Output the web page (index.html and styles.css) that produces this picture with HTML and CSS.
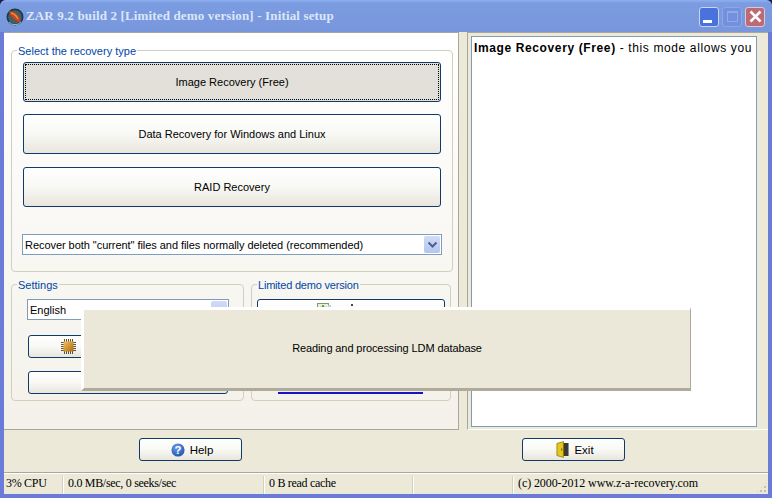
FILE: index.html
```html
<!DOCTYPE html>
<html lang="en">
<head>
<meta charset="utf-8">
<title>ZAR 9.2 build 2</title>
<link rel="stylesheet" href="styles.css">
</head>
<body>
<div class="window">
  <header class="titlebar">
    <svg class="app-icon" width="18" height="18" viewBox="0 0 18 18">
      <circle cx="9" cy="9" r="8.5" fill="#1d3a46"/>
      <circle cx="9" cy="9" r="6.8" fill="#40606a"/>
      <path d="M3 3.5 C7 2.5 12 6 14.5 12 C15 14 13.500 14.500 12 13.500 C8 11.500 4.500 8 3 3.500Z" fill="#d8401c"/>
      <path d="M5 5 C8 5.500 10.500 8 12 11" stroke="#f09030" stroke-width="1.300" fill="none"/>
      <path d="M3 14 A8 8 0 0 0 15 14" stroke="#a8c4d0" fill="none"/>
    </svg>
    <span class="title">ZAR 9.2 build 2 [Limited demo version] - Initial setup</span>
    <div class="controls">
      <span class="ctl ctl-min"><i></i></span>
      <span class="ctl ctl-max"><i></i></span>
      <span class="ctl ctl-close">
        <svg width="15" height="15" viewBox="0 0 15 15"><path d="M2.500 2.500 L12.500 12.500 M12.500 2.500 L2.500 12.500" stroke="#fff" stroke-width="2.600"/></svg>
      </span>
    </div>
  </header>

  <div class="client">
    <main class="main">
      <section class="left">
        <fieldset class="group group-type">
          <legend>Select the recovery type</legend>
          <button class="btn btn-large btn-focus" type="button"><span>Image Recovery (Free)</span></button>
          <button class="btn btn-large" type="button">Data Recovery for Windows and Linux</button>
          <button class="btn btn-large" type="button">RAID Recovery</button>
          <div class="combo combo-mode">
            <span class="combo-text">Recover both "current" files and files normally deleted (recommended)</span>
            <span class="combo-arrow"><svg width="11" height="8" viewBox="0 0 11 8"><path d="M1.500 1.500 L5.500 5.500 L9.500 1.500" stroke="#4d6185" stroke-width="2" fill="none"/></svg></span>
          </div>
        </fieldset>
        <div class="lower">
          <fieldset class="group group-settings">
            <legend>Settings</legend>
            <div class="combo combo-lang">
              <span class="combo-text">English</span>
              <span class="combo-arrow"></span>
            </div>
            <button class="btn btn-small btn-chip" type="button">
              <svg width="15" height="15" viewBox="0 0 15 15">
                <defs><linearGradient id="chip" x1="0" y1="0" x2="1" y2="1"><stop offset="0" stop-color="#f2c058"/><stop offset="1" stop-color="#b06c10"/></linearGradient></defs>
                <path d="M3.500 0v15M5.500 0v15M7.500 0v15M9.500 0v15M11.500 0v15M0 3.500h15M0 5.500h15M0 7.500h15M0 9.500h15M0 11.500h15" stroke="#5c4e38"/>
                <rect x="2.500" y="2.500" width="10" height="10" fill="url(#chip)"/>
              </svg>
            </button>
            <button class="btn btn-small" type="button"></button>
          </fieldset>
          <fieldset class="group group-demo">
            <legend>Limited demo version</legend>
            <button class="btn btn-buy" type="button">
              <svg width="14" height="14" viewBox="0 0 14 14">
                <rect x="0.500" y="0.500" width="11" height="13" fill="#e8f0d8" stroke="#7a9a70"/>
                <path d="M6 2v5M3.500 4.500h5" stroke="#3a8a30" stroke-width="1.500"/>
                <rect x="11" y="2" width="3" height="8" fill="#a8d8e8"/>
              </svg>
              <b class="tip"></b>
            </button>
            <div class="link-line"></div>
          </fieldset>
        </div>
      </section>
      <aside class="right">
        <div class="info">
          <strong>Image Recovery (Free)</strong> - this mode allows you
        </div>
      </aside>
    </main>

    <div class="actions">
      <button class="btn btn-action" type="button">
        <svg width="14" height="14" viewBox="0 0 16 16">
          <defs><radialGradient id="hg" cx="0.400" cy="0.300" r="0.800"><stop offset="0" stop-color="#6c9ce8"/><stop offset="1" stop-color="#1b4fa8"/></radialGradient></defs>
          <circle cx="8" cy="8" r="7.500" fill="url(#hg)"/>
          <text class="help-mark" x="8" y="12.500" text-anchor="middle">?</text>
        </svg>
        Help
      </button>
      <button class="btn btn-action" type="button">
        <svg width="13" height="17" viewBox="0 0 14 18">
          <rect x="7" y="2" width="6.500" height="14" fill="#3a3a30"/>
          <path d="M1 2.500 L8 0.500 V17.500 L1 15.500Z" fill="#e6c81c" stroke="#8a7410" stroke-width="0.800"/>
          <rect x="5.500" y="8" width="1.200" height="2.200" fill="#6a5a10"/>
        </svg>
        Exit
      </button>
    </div>

    <footer class="status">
      <span class="cell cell-cpu">3% CPU</span>
      <span class="cell cell-speed">0.0 MB/sec, 0 seeks/sec</span>
      <span class="cell cell-cache">0 B read cache</span>
      <span class="cell cell-empty"></span>
      <span class="cell cell-copy">(c) 2000-2012 www.z-a-recovery.com</span>
      <span class="grip"></span>
    </footer>
  </div>

  <div class="overlay">Reading and processing LDM database</div>
</div>
</body>
</html>
```
FILE: styles.css
```css
* { box-sizing: border-box; }
html, body { margin: 0; padding: 0; background: #1c2240; }
.window {
  position: relative;
  width: 772px;
  height: 498px;
  display: flex;
  flex-direction: column;
  overflow: hidden;
  border-radius: 6px 6px 0 0;
  background: #6b7bd8;
  font: 11px "Liberation Sans", sans-serif;
  color: #000;
}
.titlebar {
  height: 32px;
  flex: none;
  display: flex;
  align-items: center;
  padding: 0 7px 0 6px;
  background: linear-gradient(#8eb0ee 0, #7c9ce2 3px, #7a9ade 14px, #7896dc 100%);
}
.app-icon { flex: none; margin-top: 1px; }
.title {
  margin-left: 2px;
  font: bold 13px "Liberation Serif", serif;
  letter-spacing: 0.15px;
  color: #dbe6fa;
}
.controls { margin-left: auto; display: flex; gap: 3px; margin-top: 1px; }
.ctl {
  width: 20px;
  height: 20px;
  border: 1px solid #c8d4f4;
  border-radius: 3px;
  display: flex;
  align-items: center;
  justify-content: center;
  background: #4a72dc;
}
.ctl-min i { width: 9px; height: 3px; background: #fff; margin: 9px 3px 0 0; }
.ctl-max { background: #7290de; border-color: #8ea6e6; }
.ctl-max i { width: 11px; height: 11px; border: 1px solid #93a9e6; border-top-width: 2px; }
.ctl-close { background: #bd6a74; border-color: #d8c8d8; }

.client {
  flex: 1;
  margin: 0 4px 4px;
  background: #ece9d8;
  display: flex;
  flex-direction: column;
}
.main { height: 398px; flex: none; display: flex; gap: 8px; }
.left {
  width: 455px;
  flex: none;
  border-top: 1px solid #a9a79c;
  border-right: 1px solid #a9a79c;
  border-bottom: 1px solid #a9a79c;
  background: linear-gradient(#ffffff, #f3f1e9);
  padding: 10px 5px 0 7px;
}
.right {
  flex: 1;
  border-top: 1px solid #a9a79c;
  border-left: 1px solid #a9a79c;
  border-bottom: 1px solid #fff;
  padding: 3px 11px 1px 3px;
}
.info {
  height: 391px;
  background: #fff;
  border: 1px solid #7f9db9;
  padding: 4px 2px;
  font: 12px "Liberation Sans", sans-serif;
  letter-spacing: 0.62px;
  line-height: 15px;
  white-space: nowrap;
  overflow: hidden;
}
.group {
  margin: 0;
  padding: 0;
  border: 1px solid #d0d0bf;
  border-radius: 4px;
  min-width: 0;
}
.group legend {
  margin-left: 5px;
  padding: 2px 1px 0;
  color: #0046a8;
  font-size: 11px;
  line-height: 13px;
}
.group-demo legend { letter-spacing: -0.2px; }
.group-type { height: 229px; display: flex; flex-direction: column; padding-top: 4px; }
.lower { display: flex; gap: 7px; margin-top: 5px; }
.group-settings { width: 233px; height: 124px; padding-top: 7px; }
.group-demo { width: 200px; height: 124px; padding-top: 7px; }

.btn {
  display: flex;
  align-items: center;
  justify-content: center;
  gap: 6px;
  border: 1px solid #0f3a6a;
  border-radius: 3px;
  padding: 0;
  background: linear-gradient(#fff, #f8f8f4 50%, #e8e6dc);
  font: 11px "Liberation Sans", sans-serif;
  color: #000;
}
.btn-large { height: 40px; flex: none; margin: 0 0 13px 11px; width: 418px; }
.btn-focus { background: #e2e0d8; padding: 1px; margin-bottom: 12px; }
.btn-focus span {
  width: 100%;
  height: 100%;
  border: 1px dotted #000;
  display: flex;
  align-items: center;
  justify-content: center;
}
.btn-small { height: 23px; margin: 0 0 13px 16px; justify-content: flex-start; width: 200px; }
.btn-chip { padding-left: 32px; }
.btn-buy { height: 40px; width: 188px; margin-left: 5px; justify-content: flex-start; align-items: flex-start; padding: 3px 0 0 59px; }
.tip { width: 2px; height: 2px; margin: 1px 0 0 14px; background: #444; }
.link-line { height: 2px; margin: 53px 0 0 26px; width: 145px; background: #1414c4; }

.combo {
  display: flex;
  align-items: center;
  border: 1px solid #7f9db9;
  background: #fff;
  height: 21px;
  padding: 0 1px 0 2px;
  width: 420px;
}
.combo-mode { margin: 14px 0 0 10px; letter-spacing: -0.05px; }
.combo-lang { width: 202px; margin: 0 0 15px 15px; }
.combo-text { flex: 1; white-space: nowrap; }
.combo-arrow {
  width: 16px;
  height: 17px;
  border-radius: 2px;
  background: linear-gradient(#d2dcf8, #b2c4f2);
  display: flex;
  align-items: center;
  justify-content: center;
}

.actions {
  height: 42px;
  flex: none;
  display: flex;
  align-items: flex-start;
  padding: 8px 0 0 135px;
  gap: 280px;
}
.btn-action { width: 103px; height: 23px; font-size: 11.5px; padding-left: 3px; gap: 5px; }
.help-mark { font: bold 13px "Liberation Sans", sans-serif; fill: #fff; }

.status {
  flex: 1;
  display: flex;
  border-top: 1px solid #a9a79c;
  box-shadow: inset 0 1px 0 #fff;
  padding-top: 3px;
  font: 12px "Liberation Serif", serif;
  position: relative;
}
.cell { border-right: 1px solid #d4d0c0; padding: 0 0 0 2px; line-height: 15px; white-space: nowrap; box-shadow: 1px 0 0 #fff; letter-spacing: -0.3px; }
.cell-cpu { width: 59px; }
.cell-speed { width: 201px; padding-left: 5px; }
.cell-cache { width: 149px; padding-left: 5px; }
.cell-empty { width: 100px; }
.cell-copy { flex: 1; border-right: 0; box-shadow: none; padding-left: 5px; letter-spacing: -0.09px; }
.grip {
  position: absolute;
  right: 1px;
  bottom: 1px;
  width: 11px;
  height: 11px;
  background:
    radial-gradient(circle at 1px 1px, #c2bfb0 1.2px, transparent 1.3px) 0 0 / 4px 4px;
  clip-path: polygon(100% 0, 100% 100%, 0 100%);
}

.overlay {
  position: absolute;
  left: 81px;
  top: 307px;
  width: 610px;
  height: 84px;
  display: flex;
  align-items: center;
  justify-content: center;
  padding-bottom: 2px;
  letter-spacing: -0.1px;
  background: #ebe8da;
  border-top: 3px solid #fff;
  border-left: 3px solid #fff;
  border-bottom: 3px solid #aeaa9c;
  border-right: 1px solid #aeaa9c;
  font-size: 11px;
}
```
